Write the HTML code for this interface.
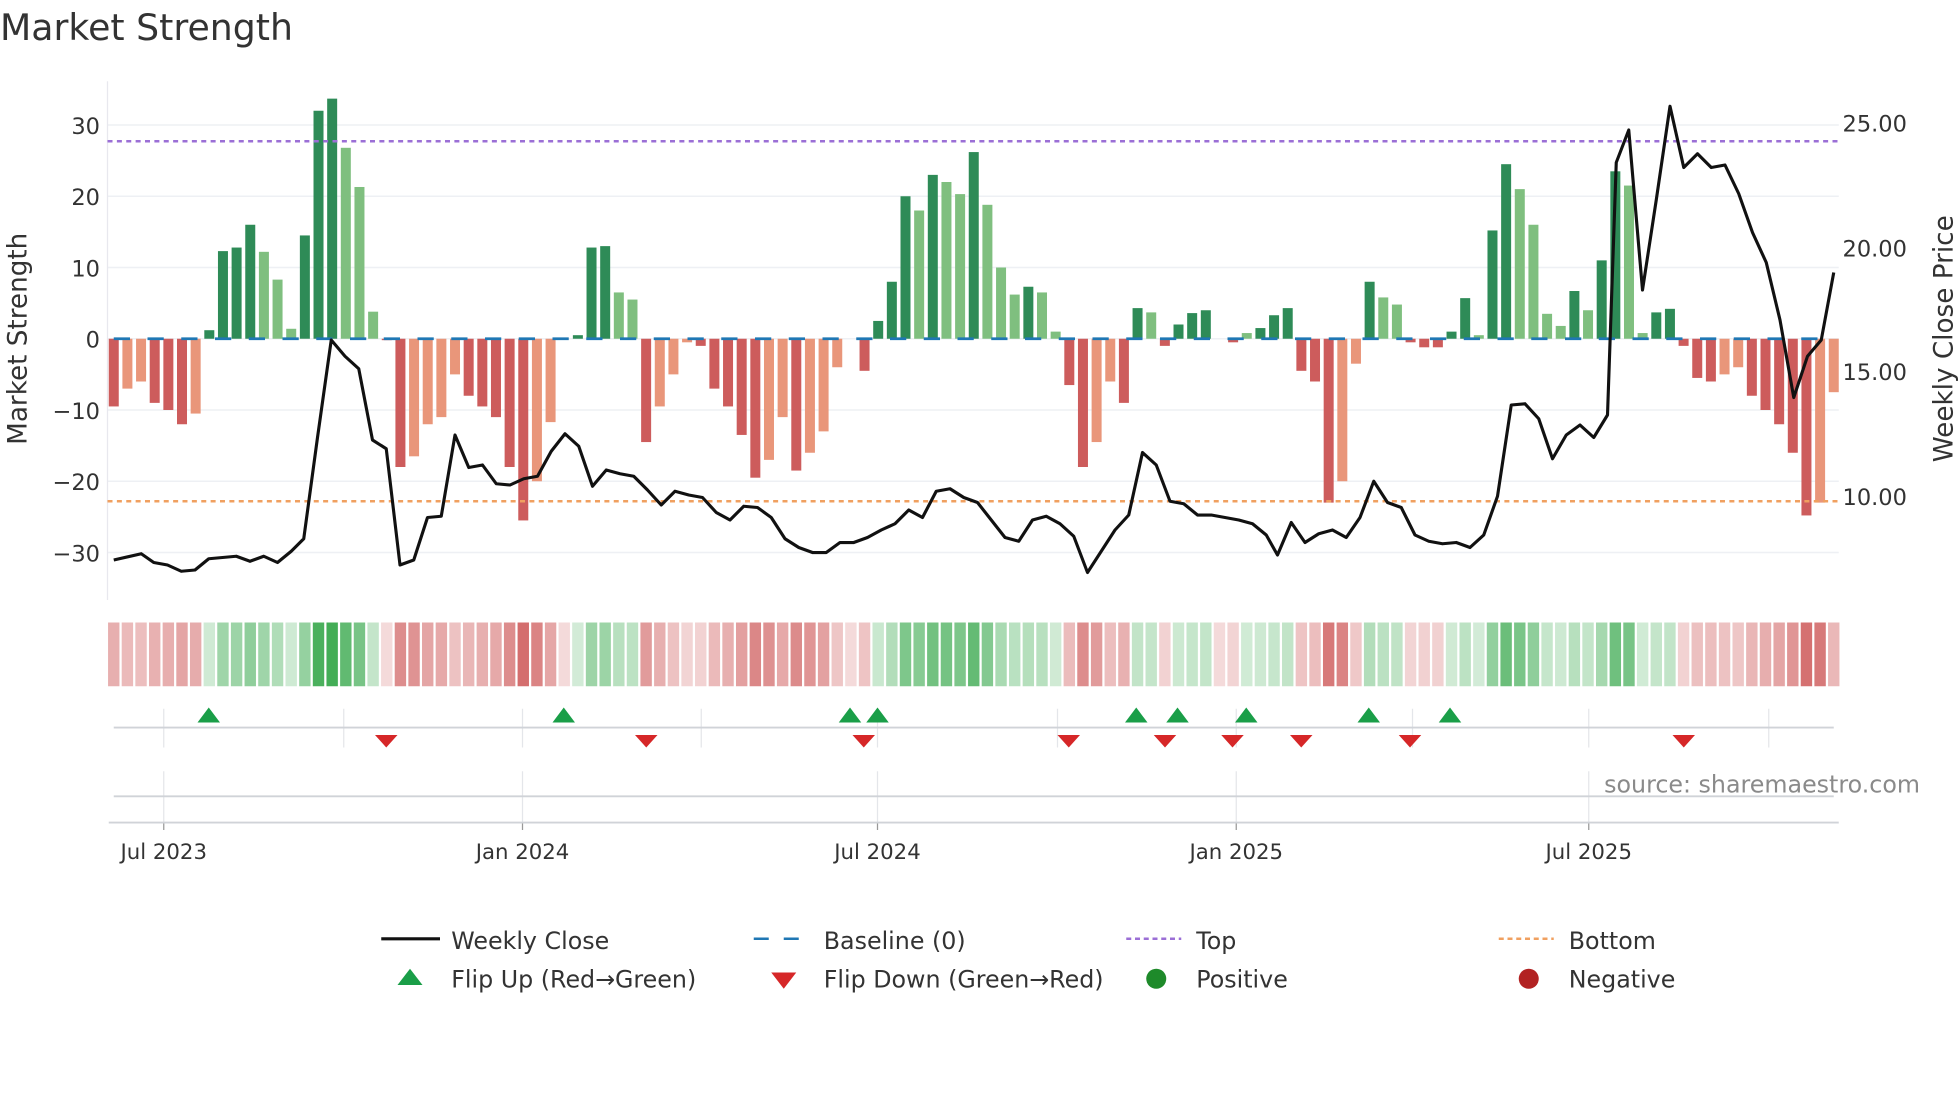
<!DOCTYPE html>
<html><head><meta charset="utf-8"><style>
html,body{margin:0;padding:0;background:#fff;width:1960px;height:1102px;overflow:hidden}
svg{display:block}
text{font-family:"DejaVu Sans","Liberation Sans",sans-serif;fill:#333}
</style></head><body>
<svg id="s" width="1960" height="1102" viewBox="0 0 1568 881.6" xmlns="http://www.w3.org/2000/svg">
<text x="0" y="32" font-size="29">Market Strength</text>
<g id="grid"></g>
<g id="bars"></g>
<g id="heat"></g>
<g id="price"></g>
<g id="flags"></g>
<text x="1536" y="634" font-size="19" text-anchor="end" style="fill:#8a8a8a">source: sharemaestro.com</text>
<text transform="translate(21,271) rotate(-90)" font-size="21" text-anchor="middle">Market Strength</text>
<text transform="translate(1562,271) rotate(-90)" font-size="21" text-anchor="middle">Weekly Close Price</text>
<g font-size="18">
<text x="80" y="107" text-anchor="end">30</text>
<text x="80" y="164" text-anchor="end">20</text>
<text x="80" y="221" text-anchor="end">10</text>
<text x="80" y="278" text-anchor="end">0</text>
<text x="80" y="335" text-anchor="end">−10</text>
<text x="80" y="392" text-anchor="end">−20</text>
<text x="80" y="449" text-anchor="end">−30</text>
<text x="1474" y="105">25.00</text>
<text x="1474" y="205">20.00</text>
<text x="1474" y="304">15.00</text>
<text x="1474" y="404">10.00</text>
</g>
<g font-size="17" text-anchor="middle">
<text x="131" y="687">Jul 2023</text>
<text x="418" y="687">Jan 2024</text>
<text x="702" y="687">Jul 2024</text>
<text x="989" y="687">Jan 2025</text>
<text x="1271" y="687">Jul 2025</text>
</g>
<g font-size="19">
<line x1="305" y1="751" x2="352" y2="751" stroke="#111" stroke-width="2.5"/>
<text x="361" y="759">Weekly Close</text>
<line x1="603" y1="751" x2="646" y2="751" stroke="#1f77b4" stroke-width="2" stroke-dasharray="12 12"/>
<text x="659" y="759">Baseline (0)</text>
<line x1="901" y1="751" x2="945" y2="751" stroke="#9b6fd6" stroke-width="2" stroke-dasharray="4 3"/>
<text x="957" y="759">Top</text>
<line x1="1199" y1="751" x2="1243" y2="751" stroke="#f0a060" stroke-width="2" stroke-dasharray="4 3"/>
<text x="1255" y="759">Bottom</text>
<polygon points="328,775 338,788 318,788" fill="#1a9e48"/>
<text x="361" y="790">Flip Up (Red→Green)</text>
<polygon points="617,778 637,778 627,791" fill="#d62728"/>
<text x="659" y="790">Flip Down (Green→Red)</text>
<circle cx="925" cy="783" r="8" fill="#1e8a2a"/>
<text x="957" y="790">Positive</text>
<circle cx="1223" cy="783" r="8" fill="#b22222"/>
<text x="1255" y="790">Negative</text>
</g>
</svg>
<script>
var NS="http://www.w3.org/2000/svg";
function el(p,t,a){var e=document.createElementNS(NS,t);for(var k in a)e.setAttribute(k,a[k]);document.getElementById(p).appendChild(e);return e;}
[30,20,10,0,-10,-20,-30].forEach(function(v){var y=271-v*5.7;el("grid","line",{x1:86,x2:1471,y1:y,y2:y,stroke:"#eef0f4","stroke-width":1.2});});
el("grid","line",{x1:86,x2:86,y1:65,y2:480,stroke:"#e8e8ee"});
[131,275,418,561,702,846,989,1130,1271,1415].forEach(function(x){el("grid","line",{x1:x,x2:x,y1:567,y2:598,stroke:"#e4e6ea"});});
[131,418,702,989,1271].forEach(function(x){el("grid","line",{x1:x,x2:x,y1:617,y2:658,stroke:"#e4e6ea"});el("grid","line",{x1:x,x2:x,y1:658,y2:664,stroke:"#999"});});
el("grid","line",{x1:91,x2:1467,y1:582,y2:582,stroke:"#d0d3d8","stroke-width":1.5});
el("grid","line",{x1:91,x2:1467,y1:637,y2:637,stroke:"#d0d3d8","stroke-width":1.5});
el("grid","line",{x1:87,x2:1471,y1:658,y2:658,stroke:"#d0d3d8","stroke-width":1.5});
var B=[[-9.5,1],[-7,0],[-6,0],[-9,1],[-10,1],[-12,1],[-10.5,0],[1.2,1],[12.3,1],[12.8,1],[16,1],[12.2,0],[8.3,0],[1.4,0],[14.5,1],[32,1],[33.7,1],[26.8,0],[21.3,0],[3.8,0],[-0.2,1],[-18,1],[-16.5,0],[-12,0],[-11,0],[-5,0],[-8,1],[-9.5,1],[-11,1],[-18,1],[-25.5,1],[-20,0],[-11.7,0],[0,1],[0.5,1],[12.8,1],[13,1],[6.5,0],[5.5,0],[-14.5,1],[-9.5,0],[-5,0],[-0.5,0],[-1,1],[-7,1],[-9.5,1],[-13.5,1],[-19.5,1],[-17,0],[-11,0],[-18.5,1],[-16,0],[-13,0],[-4,0],[0,1],[-4.5,1],[2.5,1],[8,1],[20,1],[18,0],[23,1],[22,0],[20.3,0],[26.2,1],[18.8,0],[10,0],[6.2,0],[7.3,1],[6.5,0],[1,0],[-6.5,1],[-18,1],[-14.5,0],[-6,0],[-9,1],[4.3,1],[3.7,0],[-1,1],[2,1],[3.6,1],[4,1],[0,0],[-0.5,1],[0.8,0],[1.5,1],[3.3,1],[4.3,1],[-4.5,1],[-6,1],[-23,1],[-20,0],[-3.5,0],[8,1],[5.8,0],[4.8,0],[-0.5,1],[-1.2,1],[-1.2,1],[1,1],[5.7,1],[0.5,0],[15.2,1],[24.5,1],[21,0],[16,0],[3.5,0],[1.8,0],[6.7,1],[4,0],[11,1],[23.5,1],[21.5,0],[0.8,0],[3.7,1],[4.2,1],[-1,1],[-5.5,1],[-6,1],[-5,0],[-4,0],[-8,1],[-10,1],[-12,1],[-16,1],[-24.8,1],[-23,0],[-7.5,0]];
var n=B.length, x0=91, dx=(1467-91)/(n-1), bw=8;
B.forEach(function(b,i){var x=x0+i*dx,v=b[0],h=Math.abs(v)*5.7,y=v>=0?271-h:271;
 var c=v>=0?(b[1]?"#2e8b57":"#7fbf7f"):(b[1]?"#cd5c5c":"#e9967a");
 if(h>0.3)el("bars","rect",{x:x-bw/2,y:y,width:bw,height:h,fill:c});
 var a=Math.min(1,0.22+0.75*Math.abs(v)/34);
 var hc=v>=0?"rgba(60,170,80,"+a+")":"rgba(200,70,70,"+a+")";
 if(Math.abs(v)<0.3)hc="rgba(200,70,70,0.2)";
 el("heat","rect",{x:x-dx/2+0.9,y:498,width:dx-1.8,height:51,fill:hc});
});
el("bars","line",{x1:91,x2:1467,y1:271,y2:271,stroke:"#1f77b4","stroke-width":2.2,"stroke-dasharray":"13 14"});
el("bars","line",{x1:86,x2:1471,y1:113,y2:113,stroke:"#9b6fd6","stroke-width":2,"stroke-dasharray":"4 3.5"});
el("bars","line",{x1:86,x2:1471,y1:401,y2:401,stroke:"#f0a060","stroke-width":2,"stroke-dasharray":"4 3.5"});
var P=[[91,448],[113,443],[123,450],[134,452],[145,457],[156,456],[167,447],[189,445],[200,449],[211,445],[222,450],[233,441],[243,431],[254,350],[265,272],[276,285],[287,295],[298,352],[309,359],[320,452],[331,448],[342,414],[353,413],[364,348],[375,374],[386,372],[397,387],[408,388],[419,383],[430,381],[441,361],[452,347],[463,357],[474,389],[485,376],[496,379],[507,381],[518,392],[529,404],[540,393],[551,396],[562,398],[573,410],[584,416],[595,405],[606,406],[617,414],[628,431],[639,438],[650,442],[661,442],[672,434],[683,434],[694,430],[705,424],[716,419],[727,408],[738,414],[749,393],[760,391],[771,398],[782,402],[793,416],[804,430],[815,433],[826,416],[837,413],[848,419],[859,429],[870,458],[881,441],[892,424],[903,412],[914,362],[925,372],[936,401],[947,403],[958,412],[969,412],[980,414],[991,416],[1002,419],[1013,428],[1022,444],[1033,418],[1044,434],[1055,427],[1066,424],[1077,430],[1088,414],[1099,385],[1110,402],[1121,406],[1132,428],[1143,433],[1154,435],[1165,434],[1176,438],[1187,428],[1198,397],[1209,324],[1220,323],[1231,335],[1242,367],[1253,348],[1264,340],[1275,350],[1286,332],[1293,130],[1303,104],[1314,232],[1325,160],[1336,85],[1347,134],[1358,123],[1369,134],[1380,132],[1391,155],[1402,186],[1413,210],[1424,256],[1435,318],[1446,285],[1457,272],[1467,218]];
el("price","polyline",{points:P.map(function(p){return p.join(",")}).join(" "),fill:"none",stroke:"#111","stroke-width":2.5,"stroke-linejoin":"round"});
[167,451,680,702,909,942,997,1095,1160].forEach(function(x){el("flags","polygon",{points:(x)+",566 "+(x+9)+",578 "+(x-9)+",578",fill:"#1a9e48"});});
[309,517,691,855,932,986,1041,1128,1347].forEach(function(x){el("flags","polygon",{points:(x-9)+",588 "+(x+9)+",588 "+x+",598",fill:"#d62728"});});
</script>
</body></html>
